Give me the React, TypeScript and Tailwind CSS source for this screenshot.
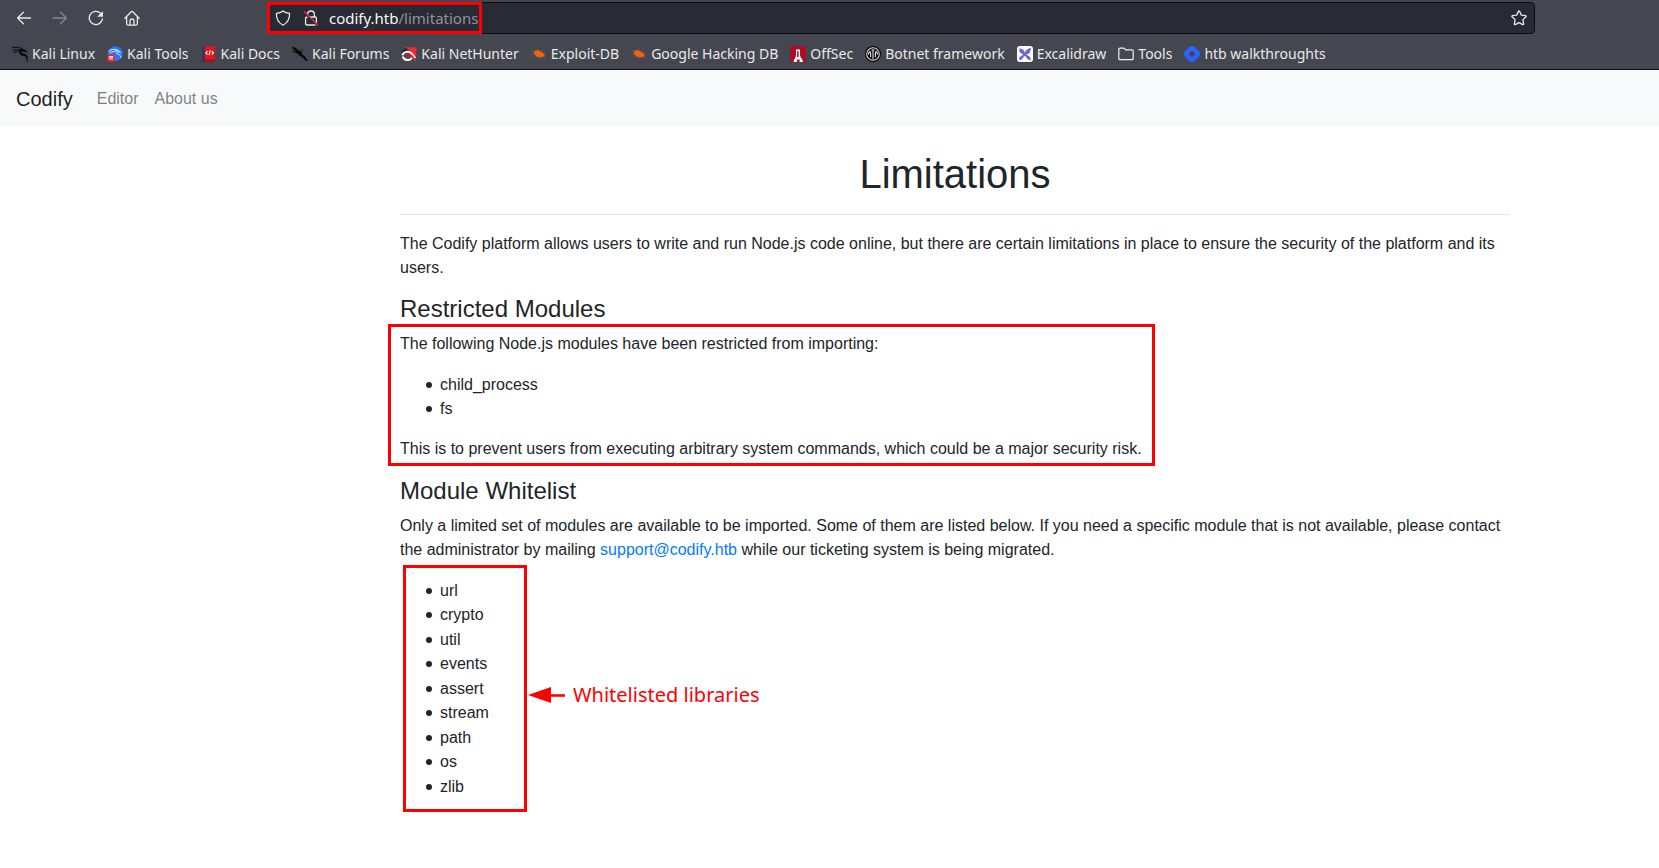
import type { ReactNode } from "react";

function Svg({ children, className = "size-4" }: { children: ReactNode; className?: string }) {
  return (
    <svg viewBox="0 0 16 16" className={`shrink-0 ${className}`} fill="none" aria-hidden="true">
      {children}
    </svg>
  );
}

const BackIcon = () => (
  <Svg>
    <path d="M14.500 8H1.600M7.400 2.200 1.600 8l5.800 5.800" stroke="currentColor" strokeWidth="1.300" strokeLinecap="round" strokeLinejoin="round" />
  </Svg>
);
const ForwardIcon = () => (
  <Svg>
    <path d="M1 8h13.400M8.600 2.200 14.400 8l-5.800 5.800" stroke="currentColor" strokeWidth="1.300" strokeLinecap="round" strokeLinejoin="round" />
  </Svg>
);
const ReloadIcon = () => (
  <Svg>
    <path d="M14.400 8.800A6.600 6.600 0 1 1 12.600 3.400" stroke="currentColor" strokeWidth="1.300" strokeLinecap="round" />
    <path d="M15 1v5.200a.5.500 0 0 1-.5.500H9.200z" fill="currentColor" />
  </Svg>
);
const HomeIcon = () => (
  <Svg>
    <path d="M.9 8.200 7.500 1.500a.7.700 0 0 1 1 0l6.600 6.700M2.600 6.600v7a1.500 1.500 0 0 0 1.500 1.500h7.800a1.500 1.500 0 0 0 1.500-1.500v-7" stroke="currentColor" strokeWidth="1.300" strokeLinecap="round" strokeLinejoin="round" />
    <path d="M6 15v-4a2 2 0 0 1 4 0v4" stroke="currentColor" strokeWidth="1.300" />
  </Svg>
);
const ShieldIcon = () => (
  <Svg>
    <path d="M8 .9c1.900 1.500 4 2.200 6.600 2.500.2 4.800-1.400 9-6.600 11.800C2.800 12.400 1.200 8.200 1.400 3.400 4 3.100 6.100 2.400 8 .9z" stroke="currentColor" strokeWidth="1.3" strokeLinejoin="round" />
  </Svg>
);
const LockIcon = () => (
  <Svg>
    <path d="M4.600 7V4.400a3.400 3.400 0 0 1 6.800 0V7M3.800 7h8.400a1.200 1.200 0 0 1 1.200 1.200v5.600a1.200 1.200 0 0 1-1.200 1.200H3.800a1.200 1.200 0 0 1-1.200-1.200V8.200A1.200 1.200 0 0 1 3.800 7z" stroke="currentColor" strokeWidth="1.3" />
    <path d="m.8 2.400 13.500 13.100" stroke="#282a36" strokeWidth="1.600" />
    <path d="m1.500 1.800 13 13" stroke="#e22850" strokeWidth="1.500" strokeLinecap="round" />
  </Svg>
);
const StarIcon = () => (
  <Svg>
    <path d="M8 1a.6.6 0 0 1 .55.35l1.800 3.750 4.200.6c.6.100.7.600.35 1l-3 2.950.7 4.300c.1.550-.4.900-.9.650L8 12.700l-3.700 1.900c-.5.250-1-.1-.9-.650l.7-4.300-3-2.950c-.35-.4-.25-.9.350-1l4.200-.6 1.800-3.750A.6.6 0 0 1 8 1z" stroke="currentColor" strokeWidth="1.3" strokeLinejoin="round" />
  </Svg>
);

const KaliDragon = () => (
  <Svg>
    <path d="M.2 1.600c3.200-.9 7-.6 9.600.9M1 4.600c2.400-1 5.400-1.100 8-.4M2 6.800c1.500-.9 3-1.300 4.600-1.400" stroke="#08090b" strokeWidth="1" strokeLinecap="round" />
    <path d="M8.400 3.200c1.700-.7 4.200.2 5.600 1.700l1.500.9-1.900.1c-1.400-.7-3-1-4-.4-1 .7-.2 2.100 1.600 2.300 2.700.4 4.100 1.700 4.100 3.700 0 1.300-.3 2.500.2 4.100-1.200-1.700-.8-3.400-1.300-4.500-.6-1.100-1.800-1.500-3.700-1.700-2.800-.4-4.100-3-2.100-6.200z" fill="#08090b" stroke="#08090b" strokeWidth=".5" />
  </Svg>
);
const KaliToolsIcon = () => (
  <Svg>
    <circle cx="8.300" cy="7.600" r="7.400" fill="#2877ff" />
    <path d="M1.800 5.200c3-2.200 6-2.300 8.300-1.400M3 7.100c1.800-1.400 3.800-2 5.900-1.800M8.800 4.600c2.300-.5 3.600.5 4.600 1.600-2.300-.6-4.200-.3-3.900.9.4 1.300 4.200.6 4.500 4.400" stroke="#dcebff" strokeWidth="1" strokeLinecap="round" />
    <circle cx="4" cy="12" r="4" fill="#ef2424" />
    <path d="M1.900 10.600h4.200M3.100 10.600v3.200M5 10.600v3.200" stroke="#fff" strokeWidth="1.100" />
  </Svg>
);
const KaliDocsIcon = () => (
  <Svg>
    <path d="M1.500.2h2.300v15.600H1.500z" fill="#20366e" />
    <path d="M3.600.2h10.400v13.400H3.600z" fill="#de1717" />
    <path d="M3.600 13.600h10.400v2.200H3.600z" fill="#a91116" />
    <path d="m6.500 5-1.600 1.800L6.500 8.500M10.800 5l1.600 1.800-1.600 1.700M9.300 4.400 8 9.200" stroke="#fff" strokeWidth="1.100" />
  </Svg>
);
const KaliForumsIcon = () => (
  <Svg>
    <path d="m.2.4 3.500 1.500 2.700 2.400 2 .5 1.700 1.900.3 2 2.100 1.200 1.400 2.500 2 1.400-.7 1.200-2.700-.9-.5-1.600-2.100-.9-.7-1.400-2.100-.4-.4-1.600-2.800-1.300L3.100 4.500 1 3.600z" fill="#050608" />
    <path d="M.6 5.200 4 6.600M9.500 4.500l1.300-.6" stroke="#050608" />
  </Svg>
);
const NetHunterIcon = () => (
  <Svg>
    <path d="M4.500 1.200H15.600L15 12 9 6.500z" fill="#f02a35" />
    <path d="M.5 5.500 5 2l3 2.500-5 4z" fill="#22252b" />
    <path d="M1.200 9.200C3 5.600 7.300 4.600 10 7l4.200 5.200M1.800 10.500c1.200 4.500 7.600 4.700 9 1" stroke="#fff" strokeWidth="2" />
    <path d="M4.300 9.700c1.400-1.800 3.400-2 4.900-.5l-3 3" stroke="#cf1826" strokeWidth="1.500" />
    <path d="m10.500 9 4.200 5.900" stroke="#ee2735" strokeWidth="1.500" />
  </Svg>
);
const ExploitIcon = () => (
  <Svg>
    <path d="M3 5.400c1.800-1.600 4.500-1.200 6.700.1 2.200 1.200 3.900 2.700 4 4.400-1.600 1.400-4.500 1.900-7 .9C4.400 9.900 2.400 7.500 3 5.400z" fill="#ee6511" />
    <path d="M4 5.800.8 4.600M4.200 7.900 1 8.700M6.400 10.200l-2.300 2M9 10.500l-.8 2.300M7 5l.5-2M9.900 5.900l1.500-2M12.200 7.800l2.500-.2M12 10.300l2.600 2.400" stroke="#a95a30" strokeWidth=".8" />
  </Svg>
);
const OffSecIcon = () => (
  <Svg>
    <path d="M0 0h16v16H0z" fill="#ad0d24" />
    <path d="M6 3.500h4v5.300c.3 2.200 1.300 3.800 2.600 5.200v2H9.600v-2.500H6.800V16h-3v-2C5.200 12.600 5.900 11 6 8.800z" fill="#fff" />
    <path d="M7.300 5h1.300v6H7z" fill="#ad0d24" />
  </Svg>
);
const BotnetIcon = () => (
  <Svg>
    <circle cx="8" cy="8" r="8" fill="#060606" />
    <circle cx="8" cy="8" r="6.300" stroke="#dedede" strokeWidth="1.100" />
    <path d="M8 4v9.500M5.600 6.200v5M10.400 6.200v5M3.600 8.400c0-2 .9-3 2-3M12.400 8.400c0-2-.9-3-2-3M6.500 4h3" stroke="#e4e4e4" strokeWidth="1.100" />
  </Svg>
);
const ExcalidrawIcon = () => (
  <Svg>
    <rect width="16" height="16" rx="3" fill="#fff" />
    <path d="m3.300 12.800 9.500-9.600M4 4.500l8 7.800" stroke="#6965db" strokeWidth="2.300" strokeLinecap="round" />
    <path d="m9.200 4 4.400-1.800-.8 4.700-2.600 1.400-2.200-2.300zM2.300 2.300l3.900 1.200L7.500 6 5 8 2.500 5.700zM2.200 13.800l.8-3.800 3 3zM11.800 9.400l2.300 4-1.500.8-3.600-2.400z" fill="#6965db" />
  </Svg>
);
const FolderIcon = () => (
  <Svg>
    <path d="M.8 3.400a1.300 1.300 0 0 1 1.300-1.300h3.400c.5 0 .8.100 1.100.5l1 1.200h6.300a1.300 1.300 0 0 1 1.300 1.300v7.300a1.300 1.300 0 0 1-1.300 1.300H2.100a1.300 1.300 0 0 1-1.300-1.300z" stroke="#f1f1ec" strokeWidth="1.200" />
  </Svg>
);
const HashnodeIcon = () => (
  <Svg>
    <path fillRule="evenodd" d="M1.100 5.300a3.800 3.800 0 0 0 0 5.400l4.200 4.200a3.800 3.800 0 0 0 5.400 0l4.200-4.200a3.800 3.800 0 0 0 0-5.400l-4.200-4.200a3.800 3.800 0 0 0-5.400 0zM8 10.700a2.700 2.700 0 1 0 0-5.400 2.700 2.700 0 0 0 0 5.400z" fill="#2962ff" />
  </Svg>
);

const bookmarks: { label: string; icon: ReactNode }[] = [
  { label: "Kali Linux", icon: <KaliDragon /> },
  { label: "Kali Tools", icon: <KaliToolsIcon /> },
  { label: "Kali Docs", icon: <KaliDocsIcon /> },
  { label: "Kali Forums", icon: <KaliForumsIcon /> },
  { label: "Kali NetHunter", icon: <NetHunterIcon /> },
  { label: "Exploit-DB", icon: <ExploitIcon /> },
  { label: "Google Hacking DB", icon: <ExploitIcon /> },
  { label: "OffSec", icon: <OffSecIcon /> },
  { label: "Botnet framework", icon: <BotnetIcon /> },
  { label: "Excalidraw", icon: <ExcalidrawIcon /> },
  { label: "Tools", icon: <FolderIcon /> },
  { label: "htb walkthroughts", icon: <HashnodeIcon /> },
];

const restricted = ["child_process", "fs"];
const whitelist = ["url", "crypto", "util", "events", "assert", "stream", "path", "os", "zlib"];

function BulletList({ items }: { items: string[] }) {
  return (
    <ul className="w-32 pl-[26px]">
      {items.map((item) => (
        <li
          key={item}
          className="flex items-center gap-2 before:size-1.5 before:shrink-0 before:rounded-full before:bg-current before:content-[''] even:mb-px"
        >
          {item}
        </li>
      ))}
    </ul>
  );
}

function BrowserChrome() {
  return (
    <header className="border-b border-[#0c0d10] bg-[#44474f] font-['Noto_Sans',sans-serif] text-[#e9e9e5]">
      <div className="flex h-9 items-center">
        <div className="flex w-[267px] shrink-0 items-center gap-5 pl-4">
          <button type="button" aria-label="Back"><BackIcon /></button>
          <button type="button" aria-label="Forward" disabled className="text-[#85878b]"><ForwardIcon /></button>
          <button type="button" aria-label="Reload"><ReloadIcon /></button>
          <button type="button" aria-label="Home"><HomeIcon /></button>
        </div>
        <div className="relative mr-[124px] flex h-8 grow items-center rounded-sm border border-[#0c0d10] bg-[#282a36] px-[7px]">
          <button type="button" aria-label="Tracking protection" className="mr-3"><ShieldIcon /></button>
          <button type="button" aria-label="Connection not secure" className="mr-2.5"><LockIcon /></button>
          <a href="#limitations" className="grow text-[15px] leading-5 text-[#929398]">
            <span className="text-[#f8f8f2]">codify.htb</span>/limitations
          </a>
          <button type="button" aria-label="Bookmark this page"><StarIcon /></button>
          <div className="pointer-events-none absolute -inset-y-px -left-px w-[215px] border-3 border-[#ff0000]" />
        </div>
      </div>
      <nav aria-label="Bookmarks" className="flex h-[33px] items-center gap-3 pt-[3px] pl-3">
        {bookmarks.map((b) => (
          <a key={b.label} href="#bookmark" className="flex items-center gap-1 text-[14px] leading-5 whitespace-nowrap">
            {b.icon}
            {b.label}
          </a>
        ))}
      </nav>
    </header>
  );
}

export default function App() {
  return (
    <div className="min-h-screen bg-white font-['Liberation_Sans',sans-serif] text-base leading-6 text-[#212529]">
      <BrowserChrome />
      <nav className="flex h-14 items-center bg-[#f8f9fa] px-4 pt-0.5">
        <a href="#home" className="mr-4 text-xl text-black/90">Codify</a>
        <a href="#editor" className="px-2 text-black/50">Editor</a>
        <a href="#about" className="px-2 text-black/50">About us</a>
      </nav>

      <main className="pl-[251px]">
        <div id="limitations" className="mx-auto max-w-[1140px] px-[15px] pt-6">
          <h1 className="text-center text-[40px] leading-12 font-medium">Limitations</h1>
          <hr className="mt-4 mb-[17px] border-black/10" />
          <p className="mb-3.5">
            The Codify platform allows users to write and run Node.js code online, but there are certain limitations in
            place to ensure the security of the platform and its users.
          </p>

          <h2 className="mb-[9px] text-2xl leading-[29px] font-medium">Restricted Modules</h2>
          <section className="relative">
            <p className="mb-[17px]">The following Node.js modules have been restricted from importing:</p>
            <BulletList items={restricted} />
            <p className="mt-4">This is to prevent users from executing arbitrary system commands, which could be a major security risk.</p>
            <div className="pointer-events-none absolute -top-2 -bottom-[5px] -left-3 w-[767px] border-3 border-[#ff0000]" />
          </section>

          <h2 className="mt-[15px] mb-[9px] text-2xl leading-[29px] font-medium">Module Whitelist</h2>
          <p className="mb-[17px]">
            Only a limited set of modules are available to be imported. Some of them are listed below. If you need a
            specific module that is not available, please contact the administrator by mailing{" "}
            <a href="mailto:support@codify.htb" className="text-[#007bff]">support@codify.htb</a> while our ticketing
            system is being migrated.
          </p>
          <section className="relative flex items-center">
            <BulletList items={whitelist} />
            <div className="pointer-events-none absolute -top-3.5 -bottom-[13px] left-[3px] w-[124px] border-3 border-[#ff0000]" />
            <div className="flex items-center gap-2 pt-3 font-['Noto_Sans',sans-serif] text-xl text-[#ff0000]">
              <svg viewBox="0 0 37 16" className="h-4 w-[37px]" aria-hidden="true">
                <path d="M0 8 23 0v16z" fill="currentColor" />
                <path d="M22 8.500h15" stroke="currentColor" strokeWidth="2.600" />
              </svg>
              Whitelisted libraries
            </div>
          </section>
        </div>
      </main>
    </div>
  );
}
